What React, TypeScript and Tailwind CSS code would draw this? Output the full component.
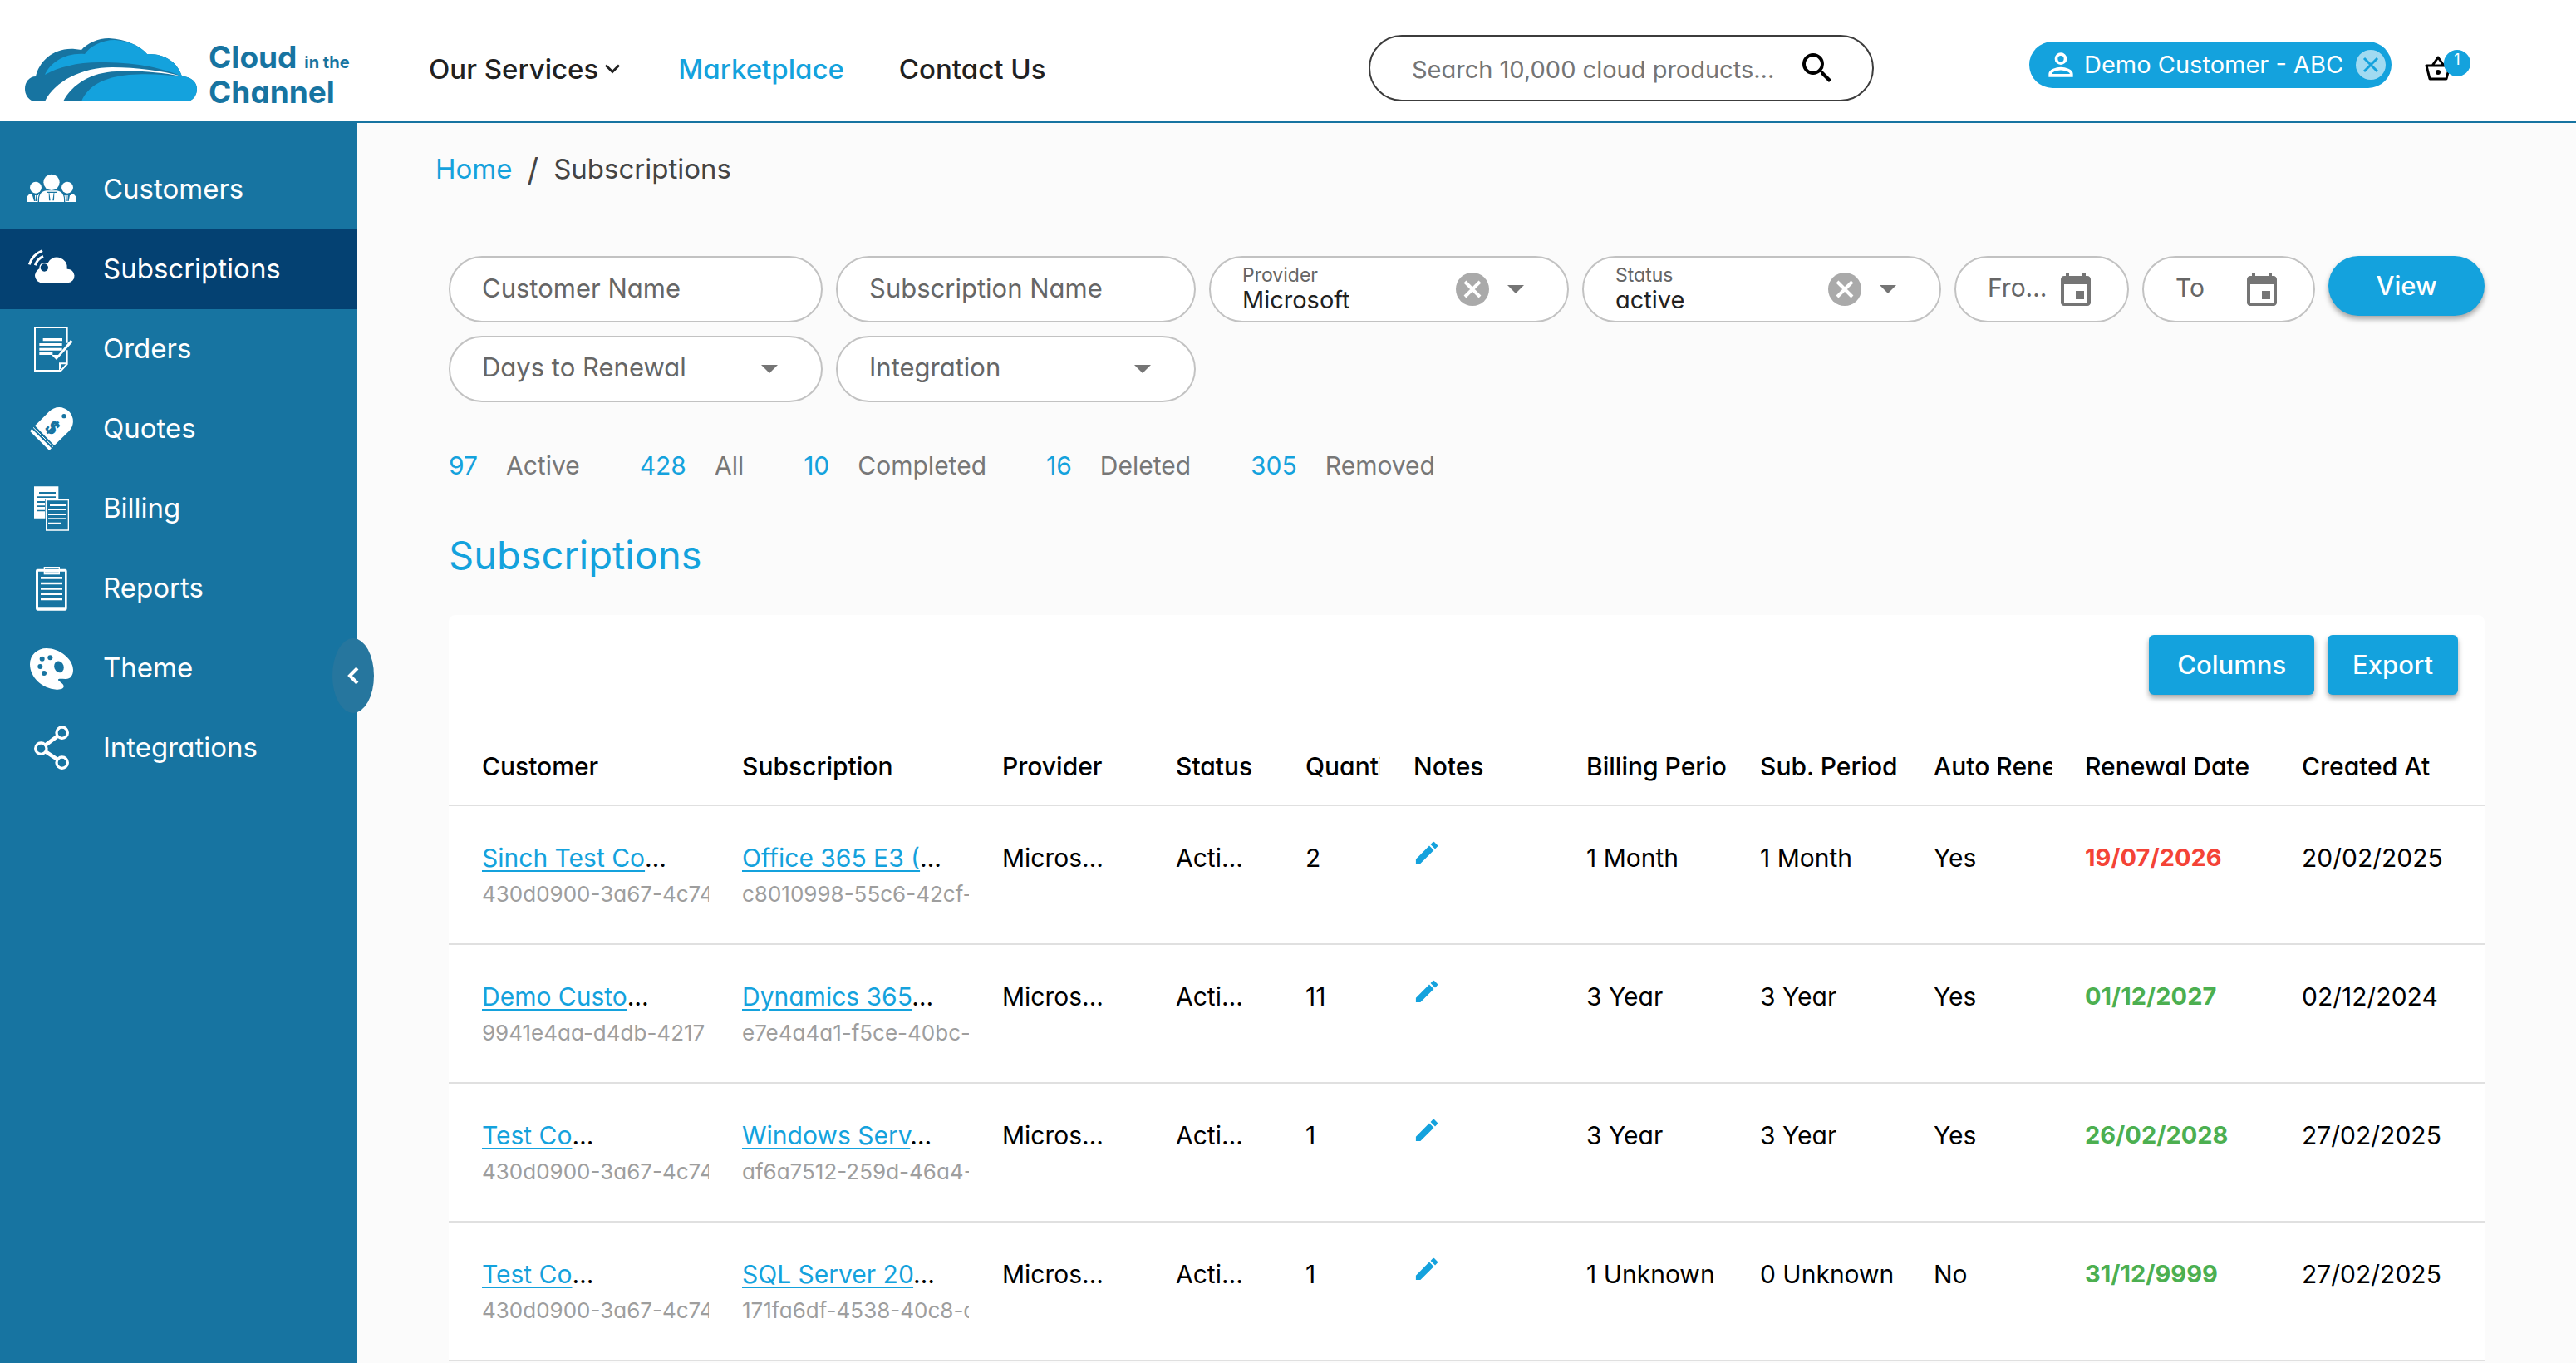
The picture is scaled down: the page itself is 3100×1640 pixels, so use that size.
import { useState, type ReactNode } from 'react';

const navItems: { label: string; viewBox: string; icon: ReactNode }[] = [
  {
    label: 'Customers',
    viewBox: '96 24 180 180',
    icon: (
      <>
        <circle cx="129" cy="107" r="21" />
        <circle cx="243" cy="107" r="21" />
        <circle cx="186" cy="88" r="29" />
        <path d="M96 159v-8c0-14 9-22 20-22h26c-4 8-5 18-5 30z" />
        <path d="M276 159v-8c0-14-9-22-20-22h-26c4 8 5 18 5 30z" />
        <path d="M141 159v-9c0-22 14-32 28-32h34c14 0 28 10 28 32v9z" />
        <g fill="#1774a1">
          <path d="M168 122h36v4h-8l-1 28h-5l4-28h-16l4 28h-5l-1-28h-8z" />
          <path d="M116 132h22v3h-4l-2 21h-4l2-21h-4l1 21h-4z" />
          <path d="M256 132h-26v3h6l2 21h4l-1-21h4l-1 21h4l4-21h4z" />
        </g>
      </>
    ),
  },
  {
    label: 'Subscriptions',
    viewBox: '96 312 180 180',
    icon: (
      <>
        <path d="M153 451a26 26 0 0 1-21-42c4-6 10-10 17-12l22-15a37 37 0 0 1 71 19 25 25 0 0 1 3 50z" />
        <circle cx="160" cy="396" r="18" />
        <circle cx="160" cy="396" r="14" fill="#044172" />
        <path d="M106 385q10-35 47-50M127 388q8-24 29-33" fill="none" stroke="white" strokeWidth="9" />
      </>
    ),
  },
  {
    label: 'Orders',
    viewBox: '96 600 180 180',
    icon: (
      <>
        <path d="M242 668v-56H126v156h94l22-24v-50" fill="none" stroke="white" strokeWidth="6" />
        <path d="M155 651h70v10h-70zM142 669h82v9h-82zM142 686h82v9h-82zM142 702h48v9h-48z" />
        <path d="M186 711h24l45-54 8 7-59 65z" />
        <path d="M213 767v-28h29l-3 6h-20v16z" />
      </>
    ),
  },
  {
    label: 'Quotes',
    viewBox: '96 888 180 180',
    icon: (
      <>
        <path d="M126 967l52-52a50 50 0 0 1 71 71l-53 52z" />
        <path d="M108 986l7-8 71 70-8 8z" />
        <path d="M120 973l72 70" stroke="white" strokeWidth="3" />
        <circle cx="231" cy="932" r="8" fill="#1774a1" />
        <text
          transform="translate(191 973) rotate(45)"
          textAnchor="middle"
          y="23"
          fontSize="68"
          fontWeight="bold"
          fontFamily="Liberation Serif, serif"
          fill="#1774a1"
          stroke="#1774a1"
          strokeWidth="4"
        >
          $
        </text>
      </>
    ),
  },
  {
    label: 'Billing',
    viewBox: '96 66 180 180',
    icon: (
      <>
        <path d="M123 76h88v46h-48v69h-40z" />
        <path d="M141 96h60v6h-60zM134 112h67v5h-67zM134 129h28v6h-28zM134 145h28v5h-28zM134 161h28v5h-28z" fill="#1774a1" />
        <path d="M167 125h80v109h-80z" fill="none" stroke="white" strokeWidth="4" />
        <path d="M180 141h60v6h-60zM174 157h66v5h-66zM174 174h66v6h-66zM174 190h66v5h-66zM174 206h48v6h-48z" />
      </>
    ),
  },
  {
    label: 'Reports',
    viewBox: '96 354 180 180',
    icon: (
      <>
        <path d="M136 374h99q7 0 7 7v136q0 7-7 7h-99q-7 0-7-7v-136q0-7 7-7zm2 9v128h96v-128z" fillRule="evenodd" />
        <path d="M158 366h58v28h-58z" />
        <path d="M162 371h50v3h-50zM162 386h50v3h-50z" fill="#1774a1" />
        <path d="M147 402h78v8h-78zM147 422h78v8h-78zM147 441h78v8h-78zM147 460h78v8h-78zM147 479h78v8h-78z" />
      </>
    ),
  },
  {
    label: 'Theme',
    viewBox: '96 642 180 180',
    icon: (
      <>
        <path d="M168 660c46 0 96 38 96 78 0 22-12 34-28 33-16 0-26-2-26 3s20 13 20 23-14 12-26 12c-52-2-96-45-96-91 0-34 26-58 60-58z" />
        <g fill="#1774a1">
          <circle cx="152" cy="698" r="9" />
          <circle cx="181" cy="694" r="9" />
          <circle cx="145" cy="726" r="9" />
          <circle cx="159" cy="750" r="9" />
          <ellipse cx="213" cy="727" rx="17" ry="21" transform="rotate(-20 213 727)" />
        </g>
      </>
    ),
  },
  {
    label: 'Integrations',
    viewBox: '96 930 180 180',
    icon: (
      <>
        <path d="M224 965l-76 57 76 51" fill="none" stroke="white" strokeWidth="14" />
        <g fill="#1774a1" stroke="white" strokeWidth="10">
          <circle cx="224" cy="965" r="20" />
          <circle cx="148" cy="1022" r="20" />
          <circle cx="224" cy="1073" r="20" />
        </g>
      </>
    ),
  },
];

const stats = [
  { count: 97, label: 'Active' },
  { count: 428, label: 'All' },
  { count: 10, label: 'Completed' },
  { count: 16, label: 'Deleted' },
  { count: 305, label: 'Removed' },
];

const columns = [
  { label: 'Customer', width: 'w-[313px]' },
  { label: 'Subscription', width: 'w-[313px]' },
  { label: 'Provider', width: 'w-[209px]' },
  { label: 'Status', width: 'w-[156px]' },
  { label: 'Quantity', width: 'w-[130px]' },
  { label: 'Notes', width: 'w-[208px]' },
  { label: 'Billing Period', width: 'w-[209px]' },
  { label: 'Sub. Period', width: 'w-[209px]' },
  { label: 'Auto Renew', width: 'w-[182px]' },
  { label: 'Renewal Date', width: 'w-[261px]' },
  { label: 'Created At', width: 'w-[260px]' },
];

const rows = [
  {
    customer: 'Sinch Test Co',
    customerId: '430d0900-3a67-4c74',
    name: 'Office 365 E3 (',
    subId: 'c8010998-55c6-42cf-',
    quantity: 2,
    billing: '1 Month',
    period: '1 Month',
    autoRenew: 'Yes',
    renewal: '19/07/2026',
    expiring: true,
    created: '20/02/2025',
  },
  {
    customer: 'Demo Custo',
    customerId: '9941e4aa-d4db-4217',
    name: 'Dynamics 365',
    subId: 'e7e4a4a1-f5ce-40bc-',
    quantity: 11,
    billing: '3 Year',
    period: '3 Year',
    autoRenew: 'Yes',
    renewal: '01/12/2027',
    expiring: false,
    created: '02/12/2024',
  },
  {
    customer: 'Test Co',
    customerId: '430d0900-3a67-4c74',
    name: 'Windows Serv',
    subId: 'af6a7512-259d-46a4-',
    quantity: 1,
    billing: '3 Year',
    period: '3 Year',
    autoRenew: 'Yes',
    renewal: '26/02/2028',
    expiring: false,
    created: '27/02/2025',
  },
  {
    customer: 'Test Co',
    customerId: '430d0900-3a67-4c74',
    name: 'SQL Server 20',
    subId: '171fa6df-4538-40c8-a',
    quantity: 1,
    billing: '1 Unknown',
    period: '0 Unknown',
    autoRenew: 'No',
    renewal: '31/12/9999',
    expiring: false,
    created: '27/02/2025',
  },
];

function Logo() {
  return (
    <svg viewBox="30 47 207 76" className="h-[76px] w-[207px] shrink-0" aria-hidden="true">
      <path fill="#1774a1" d="M40 123C33 120 30 114 30 108C30 100 35 93 43 93C47 76 63 58 90 60L98 61C105 53 118 47 131 47C152 48 168 56 177 66C198 65 214 76 219 93C230 93 237 100 237 108C237 115 233 121 227 123Z" />
      <path fill="#14a2dd" d="M54 91C60 77 78 64 102 66C108 57 122 49 138 49C155 50 170 57 177 66C198 65 214 76 219 93C190 81 160 76 120 76C92 76 70 82 54 91Z" />
      <path fill="#fff" d="M54 123C66 99 98 82 135 82C165 82 195 86 219 93C190 87 165 86 140 87C110 88 87 102 76 123Z" />
      <path fill="#14a2dd" d="M98 123C106 104 125 94 155 91C180 89 200 91 219 93C230 93 237 100 237 108C237 115 233 121 227 123Z" />
    </svg>
  );
}

function Caret() {
  return (
    <svg viewBox="0 0 20 10" className="pointer-events-none h-[10px] w-5 shrink-0 fill-[#757575]" aria-hidden="true">
      <path d="M0 0h20L10 10z" />
    </svg>
  );
}

function SelectFilter({ id, label }: { id: string; label: string }) {
  return (
    <div className="flex h-20 items-center rounded-full border-2 border-[#c2c2c2] bg-white pl-[38px] pr-[52px]">
      <select id={id} aria-label={label} className="min-w-0 flex-1 appearance-none bg-transparent pb-1 text-[31px] leading-10 text-[#666] outline-none">
        <option>{label}</option>
      </select>
      <Caret />
    </div>
  );
}

function FilledSelect({ id, label, value }: { id: string; label: string; value: string }) {
  return (
    <div className="flex h-20 items-center rounded-full border-2 border-[#c2c2c2] bg-white pl-[38px] pr-[52px]">
      <div className="flex min-w-0 flex-1 flex-col pb-[2px]">
        <label htmlFor={id} className="text-[23px] leading-7 text-[#666]">{label}</label>
        <select id={id} className="w-full appearance-none bg-transparent text-[29px] leading-8 text-[#212121] outline-none">
          <option>{value}</option>
        </select>
      </div>
      <button type="button" aria-label={`Clear ${label}`} className="mr-[22px] shrink-0">
        <svg viewBox="0 0 40 40" className="size-10">
          <circle cx="20" cy="20" r="20" fill="#aaa" />
          <path d="M11 11l18 18M29 11L11 29" stroke="white" strokeWidth="4" />
        </svg>
      </button>
      <Caret />
    </div>
  );
}

function DateFilter({ label, placeholder }: { label: string; placeholder: string }) {
  return (
    <div className="flex h-20 items-center rounded-full border-2 border-[#c2c2c2] bg-white px-[38px]">
      <input
        type="text"
        aria-label={label}
        placeholder={placeholder}
        className="w-0 min-w-0 flex-1 bg-transparent pb-1 text-[30px] leading-10 outline-none placeholder:text-[#666]"
      />
      <button type="button" aria-label={`Open ${label} calendar`} className="shrink-0 pt-1">
        <svg viewBox="0 0 24 24" className="size-12 fill-[#757575]">
          <path d="M17 12h-5v5h5v-5zM16 1v2H8V1H6v2H5c-1.110 0-1.990.9-1.990 2L3 19c0 1.100.890 2 2 2h14c1.100 0 2-.9 2-2V5c0-1.100-.9-2-2-2h-1V1h-2zm3 18H5V8h14v11z" />
        </svg>
      </button>
    </div>
  );
}

function TextFilter({ label }: { label: string }) {
  return (
    <input
      type="text"
      aria-label={label}
      placeholder={label}
      className="h-20 min-w-0 rounded-full border-2 border-[#c2c2c2] bg-white px-[38px] pb-1 text-[31px] outline-none placeholder:text-[#666]"
    />
  );
}

export default function App() {
  const [active, setActive] = useState('Subscriptions');

  return (
    <div className="flex min-h-screen flex-col bg-[#fbfbfb] font-[Inter,sans-serif] text-[30px] text-black [font-feature-settings:'cv11']">
      <header className="flex h-[148px] items-center border-b-2 border-[#1774a1] bg-white pb-[22px] pl-[30px]">
        <a href="#" className="flex w-[486px] shrink-0 items-center gap-[14px] pt-11 font-bold text-[#1774a1]">
          <Logo />
          <span className="flex flex-col pt-3 text-[37px] leading-[42px]">
            <span>Cloud <span className="text-xl">in the</span></span>
            <span>Channel</span>
          </span>
        </a>
        <nav className="flex shrink-0 items-center gap-[66px] pt-[42px] text-[33px] font-medium leading-10 text-[#212121]">
          <button type="button" className="flex items-center gap-2 pr-1">
            Our Services
            <svg viewBox="0 0 18 12" className="h-3 w-[18px]" fill="none" stroke="currentColor" strokeWidth="3">
              <path d="M1 1.500l8 8 8-8" />
            </svg>
          </button>
          <a href="#" className="text-[#14a2dd]">Marketplace</a>
          <a href="#">Contact Us</a>
        </nav>
        <form className="ml-auto mt-10 flex h-20 w-[608px] items-center rounded-full border-2 border-[#3c3c3c] pl-[50px] pr-[42px]">
          <input
            type="search"
            aria-label="Search products"
            placeholder="Search 10,000 cloud products..."
            className="min-w-0 flex-1 bg-transparent pt-1 text-[29px] outline-none placeholder:text-[#757575]"
          />
          <button type="button" aria-label="Search">
            <svg viewBox="0 0 24 24" className="size-12">
              <path d="M15.500 14h-.790l-.280-.270A6.471 6.471 0 0 0 16 9.500 6.500 6.500 0 1 0 9.500 16c1.610 0 3.090-.590 4.230-1.570l.270.280v.790l5 4.990L20.490 19l-4.990-5zm-6 0C7.010 14 5 11.990 5 9.500S7.010 5 9.500 5 14 7.010 14 9.500 11.990 14 9.500 14z" />
            </svg>
          </button>
        </form>
        <div className="ml-[187px] mt-8 flex h-14 w-[436px] shrink-0 items-center rounded-full bg-[#14a2dd] pl-4 pr-[7px] text-white">
          <svg viewBox="0 0 24 24" className="mr-[6px] size-11 shrink-0" fill="none" stroke="currentColor" strokeWidth="2">
            <circle cx="12" cy="8" r="3" />
            <path d="M5 19v-1c0-2 4-3.500 7-3.500s7 1.500 7 3.500v1z" />
          </svg>
          <span className="flex-1 whitespace-nowrap text-[29px] leading-10">Demo Customer - ABC</span>
          <button type="button" aria-label="Remove customer" className="shrink-0">
            <svg viewBox="0 0 36 36" className="size-9">
              <circle cx="18" cy="18" r="18" fill="#a1daf1" />
              <path d="M10 10l16 16M26 10L10 26" stroke="#14a2dd" strokeWidth="3" />
            </svg>
          </button>
        </div>
        <button type="button" aria-label="Basket" className="relative ml-10 mt-10 h-9 w-[100px] shrink-0">
          <svg viewBox="0 0 32 30" className="h-[30px] w-8" fill="none" stroke="black" strokeWidth="3" strokeLinejoin="round">
            <path d="M2 12h28l-4 16H6zM9 12l7-10 7 10" />
            <circle cx="16" cy="20" r="3" fill="black" stroke="none" />
          </svg>
          <span className="absolute -top-1 left-[23px] flex size-8 justify-center rounded-full bg-[#14a2dd] text-lg leading-6 text-white">1</span>
        </button>
        <svg viewBox="0 0 2 16" className="ml-[55px] mr-[25px] mt-10 h-4 w-[2px] shrink-0 fill-[#1f4e79]" aria-hidden="true">
          <path d="M0 1h1v4H0zM0 10h1v5H0z" />
        </svg>
      </header>

      <div className="flex flex-1">
        <aside className="relative w-[430px] shrink-0 bg-[#1774a1] pt-8">
          <nav className="flex flex-col">
            {navItems.map((item) => (
              <a
                key={item.label}
                href="#"
                onClick={() => setActive(item.label)}
                className={`flex h-24 items-center gap-8 pl-8 text-[33px] text-white ${active === item.label ? 'bg-[#044172]' : ''}`}
              >
                <svg viewBox={item.viewBox} className="size-[60px] fill-white" aria-hidden="true">
                  {item.icon}
                </svg>
                {item.label}
              </a>
            ))}
          </nav>
          <button
            type="button"
            aria-label="Collapse menu"
            className="absolute -right-5 top-[620px] flex h-[90px] w-[50px] items-center justify-center rounded-[50%] bg-[#26769e]"
          >
            <svg viewBox="0 0 14 22" className="h-[22px] w-[14px]" fill="none" stroke="white" strokeWidth="4">
              <path d="M12 2l-9 9 9 9" />
            </svg>
          </button>
        </aside>

        <main className="min-w-0 flex-1 px-[94px] pt-8">
          <div className="flex h-12 items-center text-[33px] text-[#444]">
            <a href="#" className="text-[#14a2dd]">Home</a>
            <span className="mx-[18px] text-[38px]">/</span>
            <span>Subscriptions</span>
          </div>

          <div className="px-4 pt-20">
            <form className="grid grid-cols-[450fr_433fr_433fr_432fr_210fr_208fr_188fr] gap-4">
              <TextFilter label="Customer Name" />
              <TextFilter label="Subscription Name" />
              <FilledSelect id="provider" label="Provider" value="Microsoft" />
              <FilledSelect id="status" label="Status" value="active" />
              <DateFilter label="From" placeholder="Fro…" />
              <DateFilter label="To" placeholder="To" />
              <button type="button" className="h-[72px] rounded-full bg-[#14a2dd] text-[31px] font-medium text-white shadow-[0_4px_6px_rgba(0,0,0,0.35)]">
                View
              </button>
              <SelectFilter id="days" label="Days to Renewal" />
              <SelectFilter id="integration" label="Integration" />
            </form>

            <div className="mt-14 flex gap-[72px] leading-10">
              {stats.map((s) => (
                <a key={s.label} href="#" className="flex items-baseline gap-[34px]">
                  <span className="text-[30px] text-[#14a2dd]">{s.count}</span>
                  <span className="text-[30px] text-[#777]">{s.label}</span>
                </a>
              ))}
            </div>

            <h1 className="mt-14 text-[47px] leading-[64px] text-[#14a2dd]">Subscriptions</h1>

            <section className="mt-10 rounded-t-lg bg-white pt-6">
              <div className="flex justify-end gap-4 pr-8">
                <button type="button" className="h-[72px] rounded-md bg-[#14a2dd] px-[34px] text-[31px] font-medium text-white shadow-[0_4px_6px_rgba(0,0,0,0.35)]">
                  Columns
                </button>
                <button type="button" className="h-[72px] rounded-md bg-[#14a2dd] px-[30px] text-[31px] font-medium text-white shadow-[0_4px_6px_rgba(0,0,0,0.35)]">
                  Export
                </button>
              </div>

              <table className="mt-9 w-full table-fixed border-separate border-spacing-0 whitespace-nowrap">
                <thead>
                  <tr>
                    {columns.map((c) => (
                      <th key={c.label} className={`h-[98px] border-b-2 border-[#e0e0e0] pl-10 pt-1 text-left font-medium ${c.width}`}>
                        <div className="overflow-hidden">{c.label}</div>
                      </th>
                    ))}
                  </tr>
                </thead>
                <tbody>
                  {rows.map((r) => (
                    <tr key={r.subId} className="h-[167px] align-top leading-[48px] *:border-b-2 *:border-[#e0e0e0] *:pl-10 *:pt-[38px]">
                      <td>
                        <a href="#" className="text-[#14a2dd] underline decoration-2 underline-offset-4">{r.customer}</a>…
                        <div className="overflow-hidden text-[26px] leading-10 text-[#9e9e9e]">{r.customerId}</div>
                      </td>
                      <td>
                        <a href="#" className="text-[#14a2dd] underline decoration-2 underline-offset-4">{r.name}</a>…
                        <div className="overflow-hidden text-[26px] leading-10 text-[#9e9e9e]">{r.subId}</div>
                      </td>
                      <td>Micros…</td>
                      <td>Acti…</td>
                      <td>{r.quantity}</td>
                      <td>
                        <button type="button" aria-label="Edit notes" className="flex h-9 items-center">
                          <svg viewBox="1 1 22 22" className="size-8 fill-[#14a2dd]">
                            <path d="M3 17.250V21h3.750L17.810 9.940l-3.750-3.750L3 17.250zM20.710 7.040a1 1 0 0 0 0-1.410l-2.340-2.340a1 1 0 0 0-1.410 0l-1.830 1.830 3.750 3.750 1.830-1.830z" />
                          </svg>
                        </button>
                      </td>
                      <td>{r.billing}</td>
                      <td>{r.period}</td>
                      <td>{r.autoRenew}</td>
                      <td className={`text-[29px] font-bold ${r.expiring ? 'text-[#f44336]' : 'text-[#4caf50]'}`}>{r.renewal}</td>
                      <td>{r.created}</td>
                    </tr>
                  ))}
                </tbody>
              </table>
            </section>
          </div>
        </main>
      </div>
    </div>
  );
}
